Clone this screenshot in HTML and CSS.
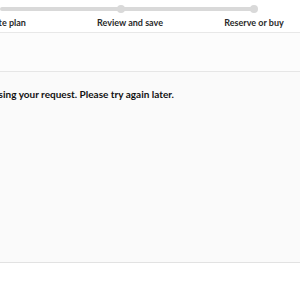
FILE: index.html
```html
<!DOCTYPE html>
<html lang="en">
<head>
    <meta charset="UTF-8">
    <title>Plan</title>
    <link rel="stylesheet" href="styles.css">
</head>
<body>
    <div class="wizard">
        <div class="progress">
            <div class="track">
                <span class="knob knob-1"></span>
                <span class="knob knob-2"></span>
            </div>
        </div>
        <div class="steps">
            <span class="step">Create plan</span>
            <span class="step">Review and save</span>
            <span class="step">Reserve or buy</span>
        </div>
    </div>
    <div class="toolbar"></div>
    <div class="content">
        <div class="error-row">
            <p class="error">An error occurred while processing your request. Please try again later.</p>
        </div>
    </div>
    <div class="footer"></div>
</body>
</html>
```

FILE: styles.css
```css
* {
    box-sizing: border-box;
    margin: 0;
    padding: 0;
}
body {
    font-family: Lato, "Liberation Sans", Arial, sans-serif;
    background: #ffffff;
    color: #222222;
    overflow: hidden;
    height: 300px;
}
.wizard {
    height: 33px;
    border-bottom: 1px solid #e8e8e8;
    background: #ffffff;
    overflow: hidden;
}
.progress {
    height: 17px;
    padding-top: 7px;
}
.track {
    position: relative;
    width: 256px;
    height: 4px;
    background: #d9d9d9;
    border-radius: 2px;
}
.knob {
    position: absolute;
    top: -2px;
    width: 8px;
    height: 8px;
    border-radius: 50%;
    background: #d9d9d9;
}
.knob-1 { left: 117px; }
.knob-2 { left: 250px; }
.steps {
    display: grid;
    grid-template-columns: 130px 124px 124px;
    margin-left: -62px;
    font-size: 9px;
    font-weight: bold;
    color: #2a2a2a;
    white-space: nowrap;
}
.step {
    text-align: center;
}
.toolbar {
    height: 39px;
    background: #fcfcfc;
    border-bottom: 1px solid #e6e6e6;
}
.content {
    height: 191px;
    background: #fafafa;
    border-bottom: 1px solid #e2e2e2;
    overflow: hidden;
}
.error-row {
    display: flex;
    justify-content: flex-end;
    width: 174px;
    margin-top: 16px;
}
.error {
    flex-shrink: 0;
    font-size: 10px;
    font-weight: bold;
    color: #111111;
    white-space: nowrap;
}
.footer {
    height: 36px;
    background: #ffffff;
}
```
